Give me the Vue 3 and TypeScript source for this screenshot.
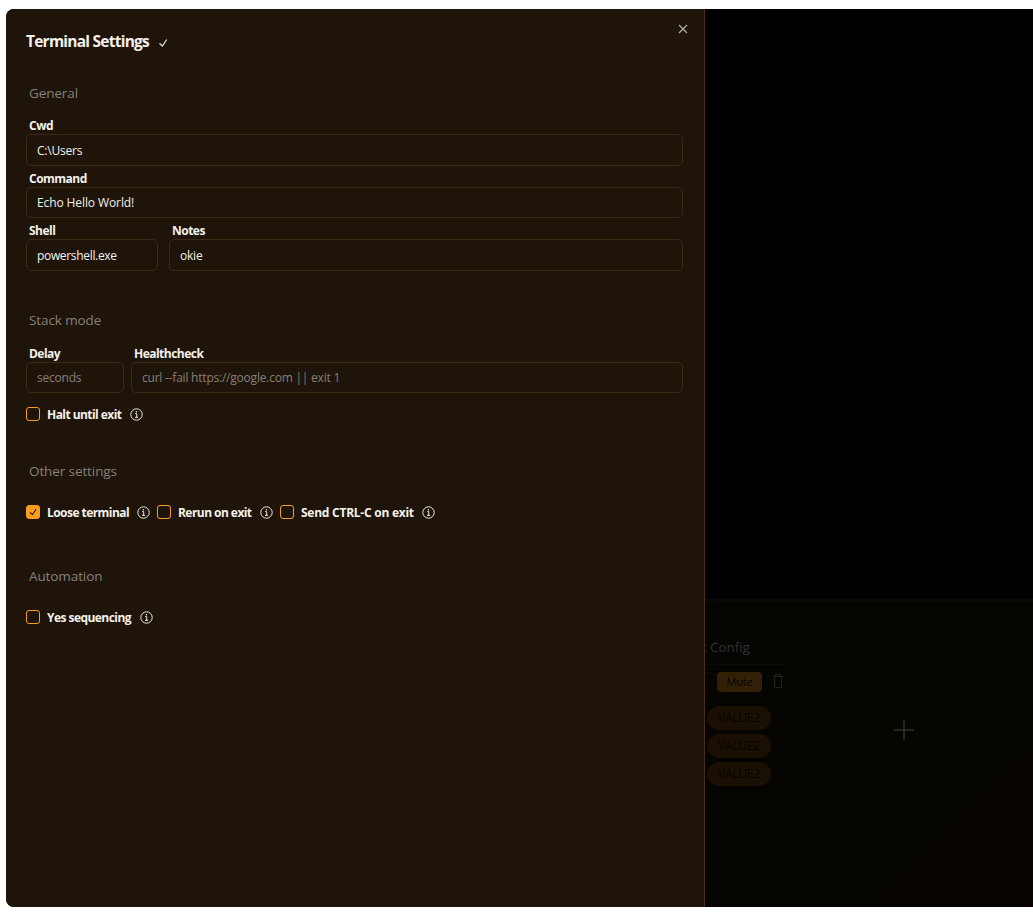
<script setup lang="ts">
import { ref } from 'vue'

interface Option {
  id: string
  label: string
  checked: boolean
}

const cwd = ref('C:\\Users')
const command = ref('Echo Hello World!')
const shell = ref('powershell.exe')
const notes = ref('okie')
const delay = ref('')
const healthcheck = ref('')

const stackOptions = ref<Option[]>([{ id: 'halt', label: 'Halt until exit', checked: false }])
const otherOptions = ref<Option[]>([
  { id: 'loose', label: 'Loose terminal', checked: true },
  { id: 'rerun', label: 'Rerun on exit', checked: false },
  { id: 'ctrlc', label: 'Send CTRL-C on exit', checked: false },
])
const automationOptions = ref<Option[]>([{ id: 'yes', label: 'Yes sequencing', checked: false }])

const groups = [
  { id: 'stack', options: stackOptions },
  { id: 'other', title: 'Other settings', options: otherOptions },
  { id: 'automation', title: 'Automation', options: automationOptions },
]
const values = ['VALUE2', 'VALUE2', 'VALUE2']
</script>

<template>
  <div class="window">
    <aside class="sheet">
      <header class="head">
        <h1>Terminal Settings</h1>
        <svg class="saved" viewBox="0 0 15 15"><path d="M11.467 3.727c.289.189.37.576.181.865l-4.25 6.5a.625.625 0 0 1-.944.12l-2.75-2.5a.625.625 0 0 1 .841-.925l2.208 2.007 3.849-5.886a.625.625 0 0 1 .865-.181Z" /></svg>
        <button class="close" aria-label="Close">
          <svg viewBox="0 0 14 14"><path d="M3 3l8 8M11 3l-8 8" /></svg>
        </button>
      </header>

      <h2 class="t-general">General</h2>
      <div class="row">
        <label class="field"><span>Cwd</span><input v-model="cwd" /></label>
      </div>
      <div class="row">
        <label class="field"><span>Command</span><input v-model="command" class="i-command" /></label>
      </div>
      <div class="row wide">
        <label class="field shell"><span>Shell</span><input v-model="shell" class="i-shell" /></label>
        <label class="field"><span>Notes</span><input v-model="notes" /></label>
      </div>

      <h2 class="t-stack">Stack mode</h2>
      <div class="row stack">
        <label class="field delay"><span>Delay</span><input v-model="delay" placeholder="seconds" /></label>
        <label class="field"><span>Healthcheck</span><input v-model="healthcheck" placeholder="curl --fail https://google.com || exit 1" /></label>
      </div>

      <template v-for="g in groups" :key="g.id">
        <h2 v-if="g.title" :class="'t-' + g.id">{{ g.title }}</h2>
        <div class="options">
          <div v-for="o in g.options.value" :key="o.id" :class="['option', 'option-' + o.id]">
            <button :class="['box', { on: o.checked }]" :aria-label="o.label" @click="o.checked = !o.checked">
              <svg v-if="o.checked" viewBox="0 0 15 15"><path d="M11.467 3.727c.289.189.37.576.181.865l-4.25 6.5a.625.625 0 0 1-.944.12l-2.75-2.5a.625.625 0 0 1 .841-.925l2.208 2.007 3.849-5.886a.625.625 0 0 1 .865-.181Z" /></svg>
            </button>
            <span class="name">{{ o.label }}</span>
            <svg class="info" viewBox="0 0 13 13">
              <circle cx="6.5" cy="6.5" r="5.7" />
              <path d="M5.2 5.6h1.5v3.6M5 9.3h3.2" />
              <circle class="dot" cx="6.4" cy="3.7" r=".8" />
            </svg>
          </div>
        </div>
      </template>
    </aside>

    <main class="backdrop">
      <div class="console"></div>
      <div class="board">
        <section class="config">
          <h3>t Config</h3>
          <div class="tools">
            <span class="stub"></span>
            <span class="mute">Mute</span>
            <svg class="trash" viewBox="0 0 12 15"><path d="M.5 3.5h11M3.5 3V1.5h5V3M2.5 3.5v11h7v-11" /></svg>
          </div>
          <div class="values">
            <span v-for="(v, i) in values" :key="i" class="value">{{ v }}</span>
          </div>
        </section>
        <svg class="plus" viewBox="0 0 20 20"><path d="M10 0v20M0 10h20" /></svg>
      </div>
    </main>
  </div>
</template>

<style>
html,
body {
  background: #fff;
  overflow: hidden;
}
</style>

<style scoped>
* {
  box-sizing: border-box;
}
.window {
  display: flex;
  width: 1027px;
  height: 898px;
  margin: 9px 0 0 6px;
  border-radius: 8px 0 0 8px;
  overflow: hidden;
  background: #000;
  font-family: 'Segoe UI', 'Open Sans', 'Noto Sans', sans-serif;
  font-size: 12px;
  color: #f4f1ec;
}
.sheet {
  position: relative;
  z-index: 1;
  flex: none;
  width: 699px;
  padding: 0 21px 0 20px;
  background: #1e1409;
  border-right: 1px solid #492e14;
}
.head {
  display: flex;
  align-items: center;
  height: 65px;
}
h1 {
  width: 130px;
  margin: -1px 0 0;
  font-size: 15.5px;
  line-height: 20px;
  font-weight: 700;
  letter-spacing: -0.76px;
  white-space: nowrap;
}
.saved {
  width: 14px;
  height: 14px;
  margin-top: 3px;
  fill: currentColor;
}
.close {
  align-self: flex-start;
  width: 14px;
  height: 14px;
  margin: 13px -7px 0 auto;
  padding: 0;
  border: 0;
  background: none;
  color: #b8b4ae;
}
svg {
  display: block;
}
.close path {
  fill: none;
  stroke: currentColor;
  stroke-width: 1.1;
}
h2 {
  height: 53px;
  margin: 0;
  padding: 10px 3px 0;
  font-size: 13.5px;
  line-height: 18px;
  font-weight: 500;
  color: #85807a;
  letter-spacing: -0.1px;
}
.row {
  display: flex;
  height: 52.5px;
}
.row.wide {
  gap: 11px;
  height: 79.5px;
}
.row.stack {
  gap: 7px;
  height: 63px;
}
.field {
  flex: 1;
  min-width: 0;
}
.shell {
  flex: 0 0 132px;
}
.delay {
  flex: 0 0 98px;
}
.field span {
  display: block;
  height: 18px;
  padding-left: 3px;
  font-weight: 700;
  line-height: 20px;
  letter-spacing: -0.52px;
}
input {
  display: block;
  width: 100%;
  height: 31.5px;
  padding: 1px 10px 0;
  border: 1px solid #3c2a14;
  border-radius: 5px;
  outline: 0;
  background: transparent;
  font: inherit;
  font-weight: 500;
  color: inherit;
  letter-spacing: -0.22px;
}
input.i-command {
  letter-spacing: -0.1px;
}
input.i-shell {
  letter-spacing: -0.33px;
}
input::placeholder {
  font-weight: 500;
  color: #85807a;
  opacity: 1;
}
.options {
  display: flex;
  align-items: center;
  height: 14px;
}
.option {
  display: flex;
  align-items: center;
}
.option-loose {
  width: 131px;
}
.option-rerun {
  width: 123px;
}
.box {
  width: 14px;
  height: 14px;
  margin: 0 7px 0 0;
  padding: 0;
  border: 1px solid #f99c20;
  border-radius: 3px;
  background: transparent;
}
.box.on {
  background: #f99c20;
}
.box svg {
  width: 12px;
  height: 12px;
  fill: #1e1409;
}
.name {
  width: 83px;
  margin-top: 2px;
  padding-top: 1px;
  font-weight: 700;
  white-space: nowrap;
  line-height: 16px;
  letter-spacing: -0.55px;
}
.info {
  width: 13px;
  height: 13px;
  margin: 1px 0 0 6.5px;
  fill: none;
  stroke: #eeebe7;
  stroke-width: 1;
}
.info .dot {
  fill: #eeebe7;
  stroke: none;
}
.backdrop {
  flex: 1;
  display: flex;
  flex-direction: column;
}
.console {
  height: 590px;
  background: #000;
}
.board {
  flex: 1;
  display: flex;
  border-top: 2px solid #0c0905;
  background: linear-gradient(135deg, #050400 55%, #080300);
}
.config {
  width: 79px;
  padding-top: 37px;
}
h3 {
  height: 27px;
  margin: 0 0 0 -3px;
  border-bottom: 1px solid #0d0b07;
  font-size: 13.5px;
  line-height: 18px;
  font-weight: 500;
  color: #33312e;
  letter-spacing: -0.1px;
}
.tools {
  display: flex;
  height: 41px;
  padding-top: 7px;
}
.stub {
  flex: none;
  width: 9px;
  height: 20px;
  margin-right: 3px;
  border: 1px solid #0d0a05;
  border-left: 0;
  border-radius: 0 4px 4px 0;
}
.mute {
  flex: none;
  width: 45px;
  height: 20px;
  border-radius: 4px;
  background: #321f06;
  color: #060400;
  font-size: 11px;
  font-weight: 500;
  line-height: 20px;
  text-align: center;
  letter-spacing: -0.2px;
}
.trash {
  flex: none;
  width: 12px;
  height: 15px;
  margin: 1px 0 0 10px;
  overflow: visible;
  fill: none;
  stroke: #24211d;
}
.values {
  display: flex;
  flex-direction: column;
  gap: 4px;
  padding-left: 2px;
}
.value {
  width: 64px;
  height: 24px;
  border-radius: 12px;
  background: #1a0f03;
  color: #050400;
  font-weight: 500;
  line-height: 24px;
  text-align: center;
  letter-spacing: -0.25px;
}
.plus {
  width: 20px;
  height: 20px;
  margin: 119px 0 0 110px;
  stroke: #33312e;
  stroke-width: 1.5;
}
.option-halt .name {
  width: 76px;
}
.option-rerun .name {
  width: 75px;
}
.option-ctrlc .name {
  width: 114px;
  letter-spacing: -0.25px;
}
.option-yes .name {
  width: 86px;
}
.t-other {
  margin-top: 31px;
}
.t-automation {
  margin-top: 38px;
}
.t-general {
  height: 42px;
}
.t-stack {
  height: 43px;
}
</style>
